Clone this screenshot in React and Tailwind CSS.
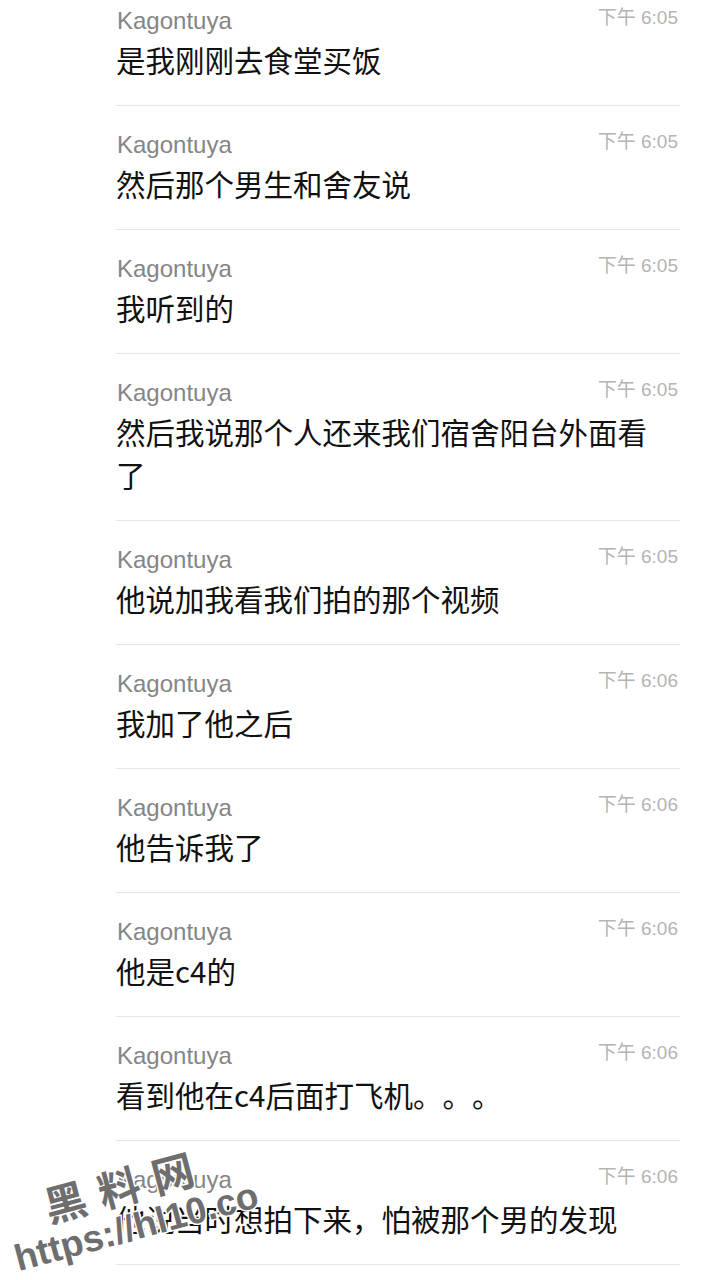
import React from "react";

const rows = [
  { t: "下午 6:05", m: "是我刚刚去食堂买饭" },
  { t: "下午 6:05", m: "然后那个男生和舍友说" },
  { t: "下午 6:05", m: "我听到的" },
  { t: "下午 6:05", m: "然后我说那个人还来我们宿舍阳台外面看了" },
  { t: "下午 6:05", m: "他说加我看我们拍的那个视频" },
  { t: "下午 6:06", m: "我加了他之后" },
  { t: "下午 6:06", m: "他告诉我了" },
  { t: "下午 6:06", m: "他是c4的" },
  { t: "下午 6:06", m: "看到他在c4后面打飞机。。。" },
  { t: "下午 6:06", m: "他说当时想拍下来，怕被那个男的发现" },
];

export default function App() {
  return (
    <div className="relative h-[1280px] w-[709px] overflow-hidden bg-white">
      <div className="mt-[-18px] ml-[116px] w-[564px]">
        {rows.map((r, i) => (
          <div key={i} className="border-b border-[#e6e6e6] pt-[25px] pb-[24px]">
            <div className="flex h-[28px] items-center justify-between">
              <span className="pl-[1px] text-[24px] leading-[28px] text-[#858585] [font-family:'Liberation_Sans','Noto_Sans_CJK_SC',sans-serif]">
                Kagontuya
              </span>
              <span className="mb-[6px] pr-[2px] text-[19px] leading-[22px] text-[#b4b4b4] [font-family:'Liberation_Sans','Noto_Sans_CJK_SC',sans-serif]">
                {r.t}
              </span>
            </div>
            <div className="mt-[3px] w-[540px] text-[29.5px] leading-[43px] text-[#111111] [text-spacing-trim:space-all] [font-family:'Noto_Sans_CJK_SC',sans-serif]">
              {r.m}
            </div>
          </div>
        ))}
      </div>

      <div className="pointer-events-none absolute left-[50px] top-[1184px] origin-bottom-left -rotate-[15deg] text-[42px] font-bold leading-none tracking-[2px] text-[#6e6e6e] [font-family:'Noto_Sans_CJK_SC',sans-serif] [-webkit-text-stroke:3px_white] [paint-order:stroke_fill]">
        黑 料 网
      </div>
      <div className="pointer-events-none absolute left-[20px] top-[1240px] origin-bottom-left -rotate-[15deg] text-[37px] font-bold leading-none text-[#6e6e6e] [font-family:'Liberation_Sans',sans-serif] [-webkit-text-stroke:3px_white] [paint-order:stroke_fill]">
        https://hl10.co
      </div>
    </div>
  );
}
